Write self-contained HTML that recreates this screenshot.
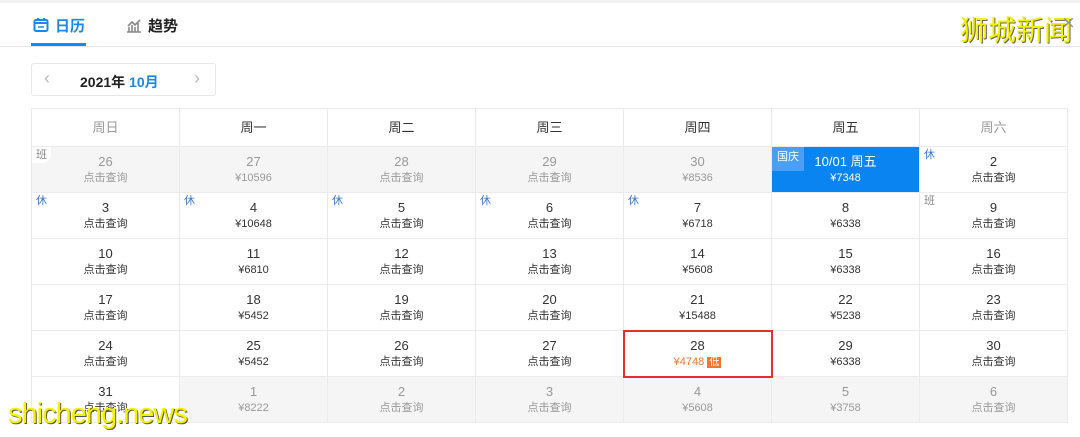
<!DOCTYPE html>
<html><head><meta charset="utf-8"><style>
*{margin:0;padding:0;box-sizing:border-box}
body{width:1080px;height:437px;background:#fff;font-family:"Liberation Sans","Noto Sans CJK SC",sans-serif;position:relative;overflow:hidden}
.topline{position:absolute;left:0;top:0;width:1080px;height:3px;background:#f2f2f2}
.tab{position:absolute;top:15px;font-size:15px;font-weight:bold}
.hl{position:absolute;left:0;top:46px;width:1080px;height:1px;background:#e6e6e6}
.ul{position:absolute;left:31px;top:43px;width:55px;height:3px;background:#1a88e8}
.picker{position:absolute;left:31px;top:63px;width:185px;height:33px;border:1px solid #e8e8e8;border-radius:3px}
.grid{position:absolute;left:31px;top:108px;display:grid;grid-template-columns:repeat(7,148px);grid-template-rows:38px repeat(6,46px);border-left:1px solid #ebebeb;border-top:1px solid #ebebeb}
.grid>div{border-right:1px solid #ebebeb;border-bottom:1px solid #ebebeb;position:relative;text-align:center;font-size:13px;color:#333}
.h{line-height:37px;font-size:14px}
.c{padding-top:7px;line-height:16px}
.c small{display:block;font-size:11px;line-height:16px}
.g{background:#f5f5f5;color:#999!important}
.tag{position:absolute;left:0;top:0;font-size:11px;color:#3a78d8;padding:1px 4px;background:#fff;border-radius:0 0 8px 0;line-height:14px}
.tag.b{color:#888}
.sel{background:#0a84f0!important;color:#fff!important}
.red{outline:2px solid #e5302a;outline-offset:-1px;z-index:2}
</style></head><body>
<div class="topline"></div>
<div class="tab" style="left:33px;color:#1a88e8"><svg width="16" height="16" viewBox="0 0 16 16" style="vertical-align:-2px;margin-right:6px"><rect x="1.5" y="3" width="13" height="11" rx="1.5" fill="none" stroke="#1a88e8" stroke-width="2"/><path d="M5 1v3M11 1v3M2 6h12" stroke="#1a88e8" stroke-width="2"/><path d="M5 10h6" stroke="#1a88e8" stroke-width="1.5"/></svg>日历</div>
<div class="tab" style="left:126px;color:#222"><svg width="16" height="16" viewBox="0 0 16 16" style="vertical-align:-2px;margin-right:6px"><path d="M1 15h14M3 15V10M6 15V8M9 15V10M12 15V6M2 9l4-4 3 3 5-5" stroke="#888" stroke-width="1.6" fill="none"/></svg>趋势</div>
<div style="position:absolute;left:960px;top:12px;font-size:28px;color:#f5f000;text-shadow:1px 1px 0 #666;font-family:'Noto Sans CJK SC',sans-serif;line-height:34px">狮城新闻</div>
<div style="position:absolute;left:1062px;top:10px;font-size:22px;color:#999">×</div>
<div class="hl"></div><div class="ul"></div>
<div class="picker">
<span style="position:absolute;left:12px;top:4px;color:#bbb;font-size:18px">‹</span>
<span style="position:absolute;left:48px;top:8px;font-size:14px;font-weight:bold;color:#222">2021年 <span style="color:#1a88e8">10月</span></span>
<span style="position:absolute;left:162px;top:4px;color:#bbb;font-size:18px">›</span>
</div>
<div class="grid">
<div class="h" style="color:#999">周日</div><div class="h">周一</div><div class="h">周二</div><div class="h">周三</div><div class="h">周四</div><div class="h">周五</div><div class="h" style="color:#999">周六</div>
<div class="c g"><span class="tag b">班</span>26<small>点击查询</small></div>
<div class="c g">27<small>¥10596</small></div>
<div class="c g">28<small>点击查询</small></div>
<div class="c g">29<small>点击查询</small></div>
<div class="c g">30<small>¥8536</small></div>
<div class="c sel"><span class="tag" style="background:#4a9ff5;color:#fff;border-radius:0;padding:3px 5px;height:24px">国庆</span>10/01 周五<small>¥7348</small></div>
<div class="c"><span class="tag">休</span>2<small>点击查询</small></div>
<div class="c"><span class="tag">休</span>3<small>点击查询</small></div>
<div class="c"><span class="tag">休</span>4<small>¥10648</small></div>
<div class="c"><span class="tag">休</span>5<small>点击查询</small></div>
<div class="c"><span class="tag">休</span>6<small>点击查询</small></div>
<div class="c"><span class="tag">休</span>7<small>¥6718</small></div>
<div class="c">8<small>¥6338</small></div>
<div class="c"><span class="tag b">班</span>9<small>点击查询</small></div>
<div class="c">10<small>点击查询</small></div><div class="c">11<small>¥6810</small></div><div class="c">12<small>点击查询</small></div><div class="c">13<small>点击查询</small></div><div class="c">14<small>¥5608</small></div><div class="c">15<small>¥6338</small></div><div class="c">16<small>点击查询</small></div>
<div class="c">17<small>点击查询</small></div><div class="c">18<small>¥5452</small></div><div class="c">19<small>点击查询</small></div><div class="c">20<small>点击查询</small></div><div class="c">21<small>¥15488</small></div><div class="c">22<small>¥5238</small></div><div class="c">23<small>点击查询</small></div>
<div class="c">24<small>点击查询</small></div><div class="c">25<small>¥5452</small></div><div class="c">26<small>点击查询</small></div><div class="c">27<small>点击查询</small></div>
<div class="c red">28<small style="color:#f5752c">¥4748 <span style="background:#f5752c;color:#fff;font-size:10px;padding:0 2px">低</span></small></div>
<div class="c">29<small>¥6338</small></div><div class="c">30<small>点击查询</small></div>
<div class="c">31<small>点击查询</small></div>
<div class="c g">1<small>¥8222</small></div><div class="c g">2<small>点击查询</small></div><div class="c g">3<small>点击查询</small></div><div class="c g">4<small>¥5608</small></div><div class="c g">5<small>¥3758</small></div><div class="c g">6<small>点击查询</small></div>
</div>
<div style="position:absolute;left:8px;top:396px;font-size:29px;color:#f5f000;text-shadow:1px 1px 0 #555;letter-spacing:-1px;font-family:'Liberation Sans Narrow','Liberation Sans',sans-serif;line-height:36px">shicheng.news</div>
</body></html>
